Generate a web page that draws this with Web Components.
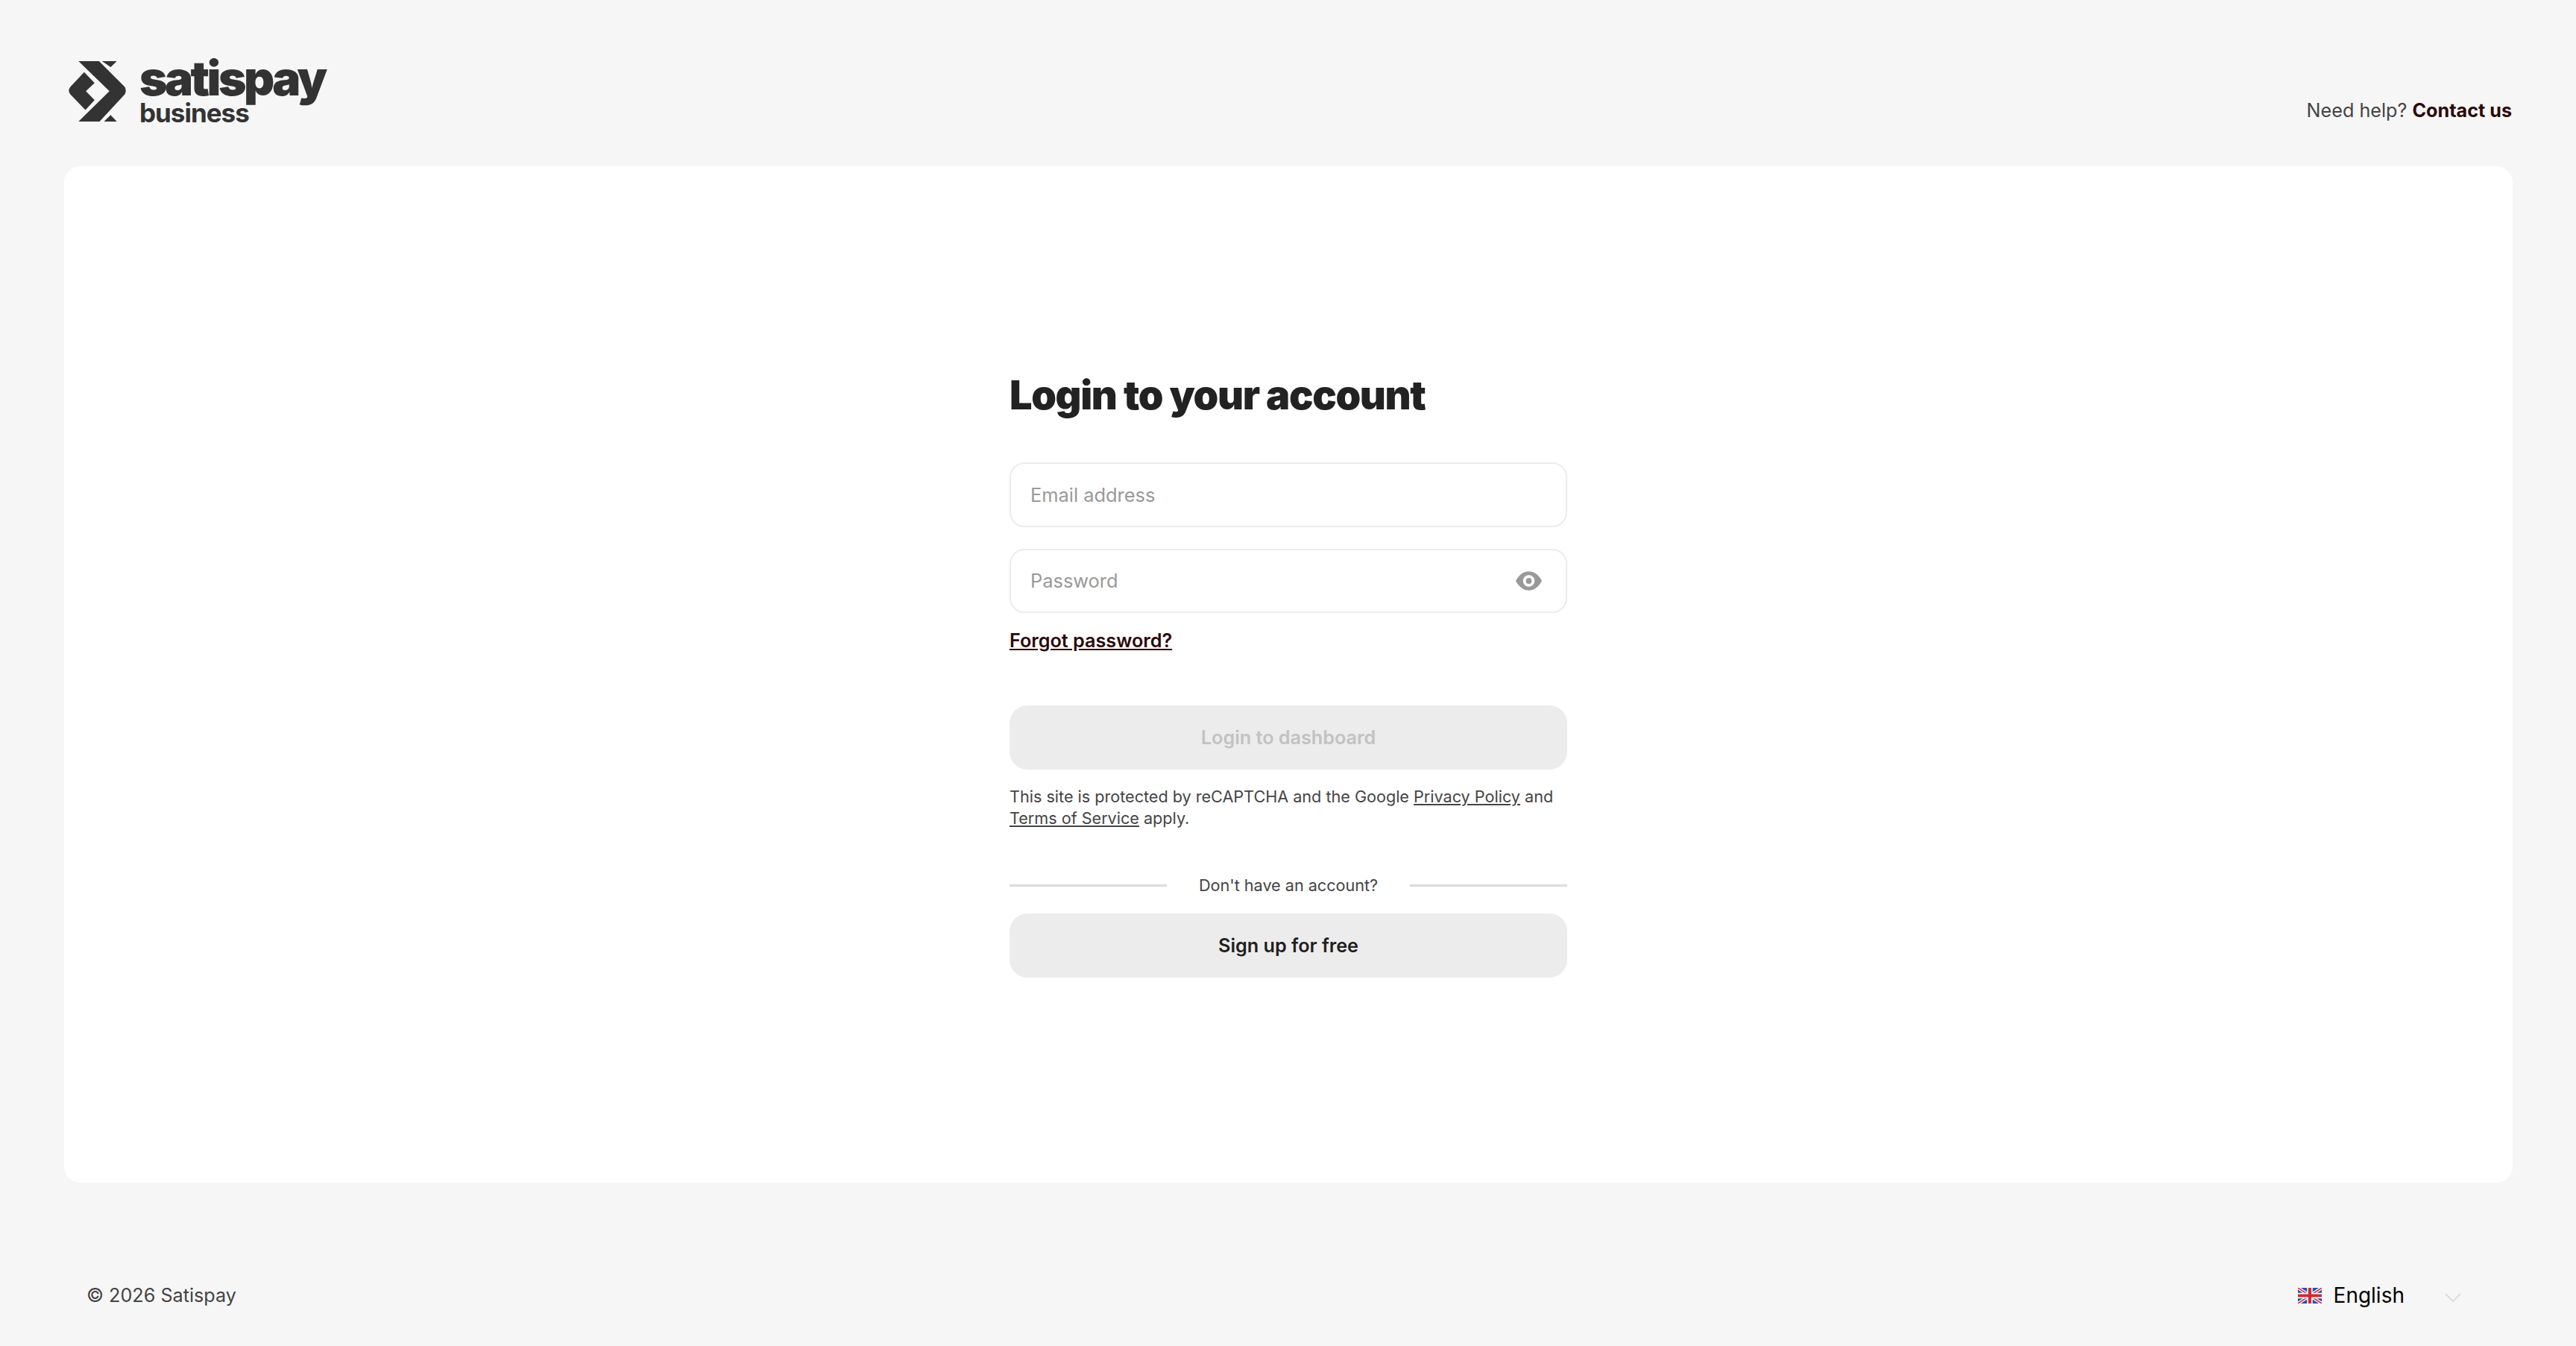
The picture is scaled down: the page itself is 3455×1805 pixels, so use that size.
<!DOCTYPE html>
<html lang="en">
<head>
<meta charset="utf-8">
<title>Satispay Business - Login</title>
<style>
  html, body { margin: 0; height: 100%; }
  body {
    background: #f6f6f6;
    color: #222;
    font-family: Inter, "Liberation Sans", sans-serif;
  }
</style>
</head>
<body>
<sp-page>
  <sp-header slot="header"></sp-header>
  <sp-login slot="main"></sp-login>
  <sp-footer slot="footer"></sp-footer>
</sp-page>

<script>
class SpPage extends HTMLElement {
  constructor() {
    super();
    this.attachShadow({ mode: 'open' });
    this.shadowRoot.innerHTML = `
      <style>
        :host { display: flex; flex-direction: column; height: 1805px; }
        .card {
          background: #fff;
          border-radius: 22px;
          height: 1363px;
          margin: 0 85px 0 86px;
          display: flex;
          justify-content: center;
          padding-top: 275px;
          box-sizing: border-box;
        }
      </style>
      <slot name="header"></slot>
      <div class="card"><slot name="main"></slot></div>
      <slot name="footer"></slot>`;
  }
}

class SpLogo extends HTMLElement {
  constructor() {
    super();
    this.attachShadow({ mode: 'open' });
    this.shadowRoot.innerHTML = `
      <style>
        :host { display: flex; gap: 17px; align-items: flex-start; color: #333; }
        svg { width: 78px; height: 81px; display: block; }
        .words { display: flex; flex-direction: column; }
        .name {
          font-size: 64px; font-weight: 900; letter-spacing: -3.6px;
          line-height: 50px; margin-top: -2px; height: 50px;
        }
        .sub {
          font-size: 35px; font-weight: 700; letter-spacing: -1px;
          line-height: 32px; margin-top: 5px;
        }
      </style>
      <svg viewBox="35 38 235 240" preserveAspectRatio="none" fill="#333">
        <path d="M75 38H158L262 140Q270 155 262 170L160 278H75L200 157Z"/>
        <path d="M98 82L140 125L105 157L140 193L103 232L42 170Q30 155 42 140Z"/>
        <path d="M170 38H230L205 62Z"/>
        <path d="M205 252L230 278H178Z"/>
      </svg>
      <div class="words">
        <span class="name">satispay</span>
        <span class="sub">business</span>
      </div>`;
  }
}

class SpHeader extends HTMLElement {
  constructor() {
    super();
    this.attachShadow({ mode: 'open' });
    this.shadowRoot.innerHTML = `
      <style>
        :host {
          display: flex; justify-content: space-between; align-items: flex-start;
          box-sizing: border-box; height: 223px;
          padding: 82px 86px 0 92px;
        }
        .help { font-size: 25.2px; line-height: 36px; color: #444; margin-top: 48px; }
        a { color: #2b0a0a; font-weight: 700; text-decoration: none; }
      </style>
      <sp-logo></sp-logo>
      <div class="help">Need help? <a href="#">Contact us</a></div>`;
  }
}

class SpField extends HTMLElement {
  constructor() {
    super();
    this.attachShadow({ mode: 'open' });
    this.shadowRoot.innerHTML = `
      <style>
        :host {
          display: flex; align-items: center; position: relative;
          box-sizing: border-box; height: 87px;
          border: 2px solid #ececec; border-radius: 20px; background: #fff;
          padding: 0 32px 0 27px;
        }
        :host([type=password]) { height: 86px; }
        input {
          flex: 1; min-width: 0; border: 0; outline: 0; background: none;
          font: inherit; font-size: 25.4px; color: #222; padding: 0;
        }
        label {
          position: absolute; left: 26px; top: calc(50% - 1px); transform: translateY(-50%);
          font-size: 25.4px; color: #999; pointer-events: none;
        }
        button { display: none; border: 0; background: none; padding: 0; cursor: pointer; }
        :host([type=password]) button { display: block; }
        svg { display: block; width: 35px; height: 26px; }
      </style>
      <label></label>
      <input>
      <button type="button" aria-label="Show password">
        <svg viewBox="0 0 36 26">
          <path fill="#999" d="M0 13C5 4 11 0 18 0S31 4 36 13C31 22 25 26 18 26S5 22 0 13Z"/>
          <circle cx="18" cy="13" r="8" fill="#fff"/>
          <circle cx="18" cy="13" r="4" fill="#999"/>
        </svg>
      </button>`;
  }

  connectedCallback() {
    const input = this.shadowRoot.querySelector('input');
    const label = this.shadowRoot.querySelector('label');
    input.type = this.getAttribute('type') || 'text';
    label.textContent = this.getAttribute('label');
    input.addEventListener('input', () => {
      label.style.display = input.value ? 'none' : '';
    });
    this.shadowRoot.querySelector('button').addEventListener('click', () => {
      input.type = input.type === 'password' ? 'text' : 'password';
    });
  }
}

class SpButton extends HTMLElement {
  constructor() {
    super();
    this.attachShadow({ mode: 'open' });
    this.shadowRoot.innerHTML = `
      <style>
        :host {
          display: flex; align-items: center; justify-content: center;
          height: 86px; border-radius: 24px; background: #ececec;
          font-size: 25.2px; font-weight: 600; color: #1f1f1f; cursor: pointer;
        }
        :host([disabled]) { color: #c2c2c2; cursor: default; }
      </style>
      <slot></slot>`;
  }
}

class SpLogin extends HTMLElement {
  constructor() {
    super();
    this.attachShadow({ mode: 'open' });
    this.shadowRoot.innerHTML = `
      <style>
        :host { display: block; width: 748px; }
        h1 {
          margin: 0 0 58px; font-size: 54px; line-height: 64px; font-weight: 900;
          letter-spacing: -1.35px; color: #222; white-space: nowrap;
        }
        sp-field + sp-field { margin-top: 29px; }
        .forgot {
          display: block; margin: 19px 0 69px; font-size: 25.2px; line-height: 36px;
          font-weight: 600; color: #2b0a0a;
        }
        .legal { margin: 22px 0 61px; font-size: 21.6px; line-height: 29px; color: #444; }
        .legal a { color: inherit; }
        .or {
          display: flex; align-items: center; gap: 43px; margin-bottom: 23px;
          font-size: 21.6px; line-height: 29px; color: #444; white-space: nowrap;
        }
        .or::before, .or::after { content: ""; flex: 1; height: 3px; background: #dcdcdc; }
      </style>
      <h1>Login to your account</h1>
      <sp-field label="Email address"></sp-field>
      <sp-field label="Password" type="password"></sp-field>
      <a class="forgot" href="#">Forgot password?</a>
      <sp-button disabled>Login to dashboard</sp-button>
      <p class="legal">This site is protected by reCAPTCHA and the Google <a href="#">Privacy Policy</a> and <a href="#">Terms of Service</a> apply.</p>
      <div class="or">Don't have an account?</div>
      <sp-button>Sign up for free</sp-button>`;
  }
}

class SpLang extends HTMLElement {
  constructor() {
    super();
    this.attachShadow({ mode: 'open' });
    this.shadowRoot.innerHTML = `
      <style>
        :host { display: flex; align-items: center; color: #000; font-size: 28px; line-height: 52px; }
        .flag { width: 32px; height: 21px; display: block; margin-right: 16px; }
        .arrow { width: 22px; height: 12px; display: block; margin: 6px 0 0 54px; }
      </style>
      <svg class="flag" viewBox="0 0 60 40" preserveAspectRatio="none">
        <rect width="60" height="40" fill="#2a4fa8"/>
        <path d="M0 0L60 40M60 0L0 40" stroke="#fff" stroke-width="8"/>
        <path d="M0 0L60 40M60 0L0 40" stroke="#cf2b36" stroke-width="3"/>
        <path d="M30 0V40M0 20H60" stroke="#fff" stroke-width="14"/>
        <path d="M30 0V40M0 20H60" stroke="#cf2b36" stroke-width="8"/>
      </svg>
      <span>English</span>
      <svg class="arrow" viewBox="0 0 22 12"><path d="M1 1L11 11L21 1" fill="none" stroke="#ddd" stroke-width="2"/></svg>`;
  }
}

class SpFooter extends HTMLElement {
  constructor() {
    super();
    this.attachShadow({ mode: 'open' });
    this.shadowRoot.innerHTML = `
      <style>
        :host {
          display: flex; justify-content: space-between; align-items: center;
          padding: 125px 154px 0 116px;
        }
        .copy { font-size: 25.2px; color: #444; }
      </style>
      <span class="copy">© 2026 Satispay</span>
      <sp-lang></sp-lang>`;
  }
}

customElements.define('sp-page', SpPage);
customElements.define('sp-logo', SpLogo);
customElements.define('sp-header', SpHeader);
customElements.define('sp-field', SpField);
customElements.define('sp-button', SpButton);
customElements.define('sp-login', SpLogin);
customElements.define('sp-lang', SpLang);
customElements.define('sp-footer', SpFooter);
</script>
</body>
</html>
